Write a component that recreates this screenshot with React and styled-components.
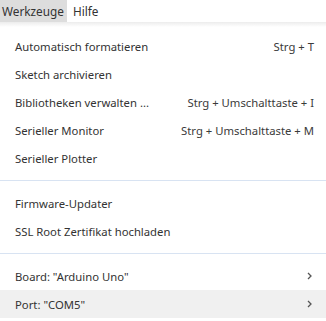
import React from 'react';
import styled, { createGlobalStyle } from 'styled-components';

const GlobalStyle = createGlobalStyle`
  html, body {
    margin: 0;
    padding: 0;
    background: #ffffff;
  }
  body {
    font-family: "Noto Sans", "Open Sans", "Liberation Sans", sans-serif;
    font-size: 11.3px;
    color: #333333;
  }
`;

const groups = [
  [
    { label: 'Automatisch formatieren', shortcut: 'Strg + T' },
    { label: 'Sketch archivieren' },
    { label: 'Bibliotheken verwalten ...', shortcut: 'Strg + Umschalttaste + I' },
    { label: 'Serieller Monitor', shortcut: 'Strg + Umschalttaste + M' },
    { label: 'Serieller Plotter' },
  ],
  [{ label: 'Firmware-Updater' }, { label: 'SSL Root Zertifikat hochladen' }],
  [
    { label: 'Board: "Arduino Uno"', submenu: true },
    { label: 'Port: "COM5"', submenu: true, active: true },
  ],
];

function Chevron() {
  return (
    <svg width="5" height="8" viewBox="0 0 5 8">
      <path d="M1 1 L4 4 L1 7" fill="none" stroke="#555" strokeWidth="1.3" />
    </svg>
  );
}

function App() {
  return (
    <>
      <GlobalStyle />
      <Page>
        <MenuBar>
          <MenuTitle $open>Werkzeuge</MenuTitle>
          <MenuTitle>Hilfe</MenuTitle>
        </MenuBar>
        <Dropdown>
          {groups.map((group, gi) => (
            <React.Fragment key={gi}>
              {gi > 0 && <Separator />}
              {group.map((item) => (
                <Item key={item.label} $active={item.active}>
                  <Label>{item.label}</Label>
                  {item.shortcut && <Shortcut>{item.shortcut}</Shortcut>}
                  {item.submenu && (
                    <Arrow>
                      <Chevron />
                    </Arrow>
                  )}
                </Item>
              ))}
            </React.Fragment>
          ))}
        </Dropdown>
      </Page>
    </>
  );
}

const Page = styled.div`
  width: 326px;
  height: 321px;
  overflow: hidden;
  display: flex;
  flex-direction: column;
`;

const MenuBar = styled.div`
  height: 22px;
  display: flex;
  align-items: stretch;
  background: #ffffff;
`;

const MenuTitle = styled.div`
  display: flex;
  align-items: center;
  padding: 0 3px 0 2px;
  margin-right: 4px;
  font-size: 11.8px;
  color: #333;
  background: ${(p) => (p.$open ? '#dddddd' : 'transparent')};
`;

const Dropdown = styled.div`
  flex: 1;
  padding-top: 10px;
  background: linear-gradient(#ececec, #ffffff 5px);
`;

const Item = styled.div`
  height: 28px;
  display: flex;
  align-items: center;
  padding: 0 12px 0 15px;
  background: ${(p) => (p.$active ? '#f0f0f0' : 'transparent')};
`;

const Label = styled.span`
  flex: 1;
  white-space: nowrap;
`;

const Shortcut = styled.span`
  white-space: nowrap;
  color: #3a3a3a;
`;

const Arrow = styled.span`
  display: flex;
  align-items: center;
  margin-right: 2px;
`;

const Separator = styled.div`
  height: 1px;
  margin: 8px 0;
  background: #d8e3f2;
`;

export default App;
